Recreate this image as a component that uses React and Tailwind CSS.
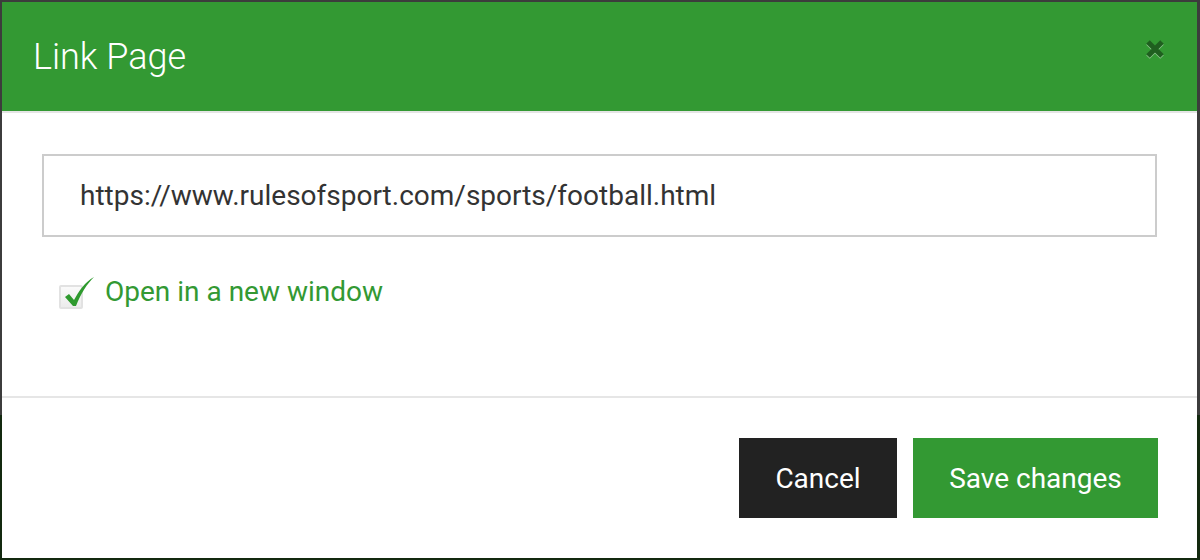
const App = () => {
    return (
        <div className="w-[1200px] h-[560px] bg-[#222] flex flex-col font-['Roboto','Liberation_Sans',sans-serif]">
            <div className="flex-1 flex pt-[2px] pb-[2px] bg-[linear-gradient(to_bottom,#3c3c3c_0,#3c3c3c_415px,#13290f_415px)]">
                <div className="ml-[2px] mr-[3px] flex-1 bg-white flex flex-col">
                    {/* header */}
                    <div className="h-[109px] bg-[#339933] border-b-2 border-[#e5e5e5] flex items-center justify-between pl-[31px] pr-[32px] box-content">
                        <h2 className="text-[36px] font-light text-white leading-none mt-[1px]">Link Page</h2>
                        <button className="leading-none mb-[16px]">
                            <svg width="20" height="20" viewBox="0 0 20 20">
                                <path d="M3 3 L17 17 M17 3 L3 17" stroke="rgba(255,255,255,0.45)" strokeWidth="5" transform="translate(0 1)" />
                                <path d="M3 3 L17 17 M17 3 L3 17" stroke="#1f5f1f" strokeWidth="5" />
                            </svg>
                        </button>
                    </div>
                    {/* body */}
                    <div className="h-[242px] px-[40px] pt-[41px] border-b-2 border-[#e6e6e6] box-content">
                        <div className="h-[83px] border-2 border-[#cccccc] flex items-center pl-[36px] text-[28px] text-[#333]">
                            https://www.rulesofsport.com/sports/football.html
                        </div>
                        <label className="mt-[34px] ml-[17px] flex items-center gap-[22px] text-[28px] text-[#339933]">
                            <span className="relative w-[24px] h-[24px] mt-[10px] border-2 border-[#e2e2e2] bg-[linear-gradient(to_bottom,#fafafa,#ececec)] rounded-[2px]">
                                <svg className="absolute left-[0px] top-[-14px]" width="36" height="36" viewBox="0 0 36 36">
                                    <path d="M4 24 L8 21 L13 27 C18 18 24 9 33 4 C26 11 20 20 15 33 L12 33 Z" fill="#2e9a2e" />
                                </svg>
                            </span>
                            <span>Open in a new window</span>
                        </label>
                    </div>
                    {/* footer */}
                    <div className="flex-1 flex justify-end items-start pt-[40px] pr-[39px] gap-[16px]">
                        <button className="w-[158px] h-[80px] pt-[2px] bg-[#222222] text-white text-[28px]">Cancel</button>
                        <button className="w-[245px] h-[80px] pt-[2px] bg-[#339933] text-white text-[28px]">Save changes</button>
                    </div>
                </div>
            </div>
        </div>
    );
};

export default App;
